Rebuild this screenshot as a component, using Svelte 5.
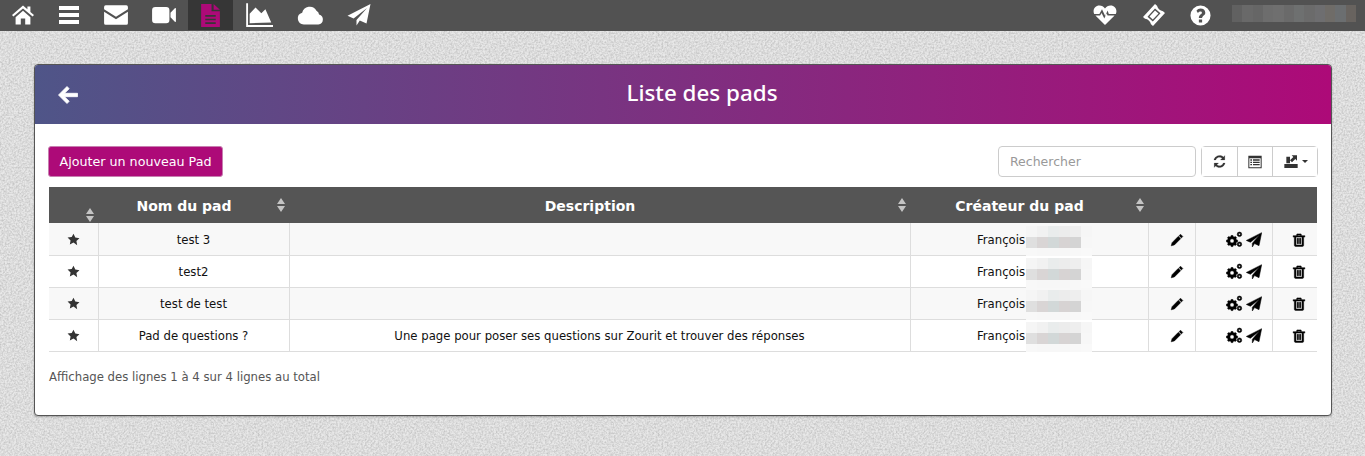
<script>
  const icons = {
    home: 'M12 2.500 1 12l1.400 1.600L12 5.400l9.600 8.200L23 12l-3.600-3.100V3.500h-3v2.800zM4.600 14.200 12 7.800l7.400 6.400V21.500h-5.200v-6H9.800v6H4.600z',
    bars: 'M2 3h20v4H2zM2 10h20v4H2zM2 17h20v4H2z',
    envelope: 'M2.500 3h19A1.500 1.500 0 0 1 23 4.500V6.600L12 13.600 1 6.600V4.500A1.500 1.500 0 0 1 2.500 3zM1 9l11 7 11-7v10.500a1.500 1.500 0 0 1-1.500 1.500h-19A1.500 1.500 0 0 1 1 19.500z',
    video: 'M4 4.500h10a3 3 0 0 1 3 3v9a3 3 0 0 1-3 3H4a3 3 0 0 1-3-3v-9a3 3 0 0 1 3-3zM18 10l4-4.200c.5-.5 1-.2 1 .4v11.600c0 .6-.5.9-1 .4L18 14z',
    file: 'M3 1h10v7h8v15H3zM15 1l6 5.400H15zM7 11.500v1.600h10v-1.600zM7 15v1.600h10V15zM7 18.500v1.600h10v-1.600z',
    chart: 'M1 2h1.600v18.600H24V22.200H1zM4 19V11l5-5.500 5 5 3.500-3.500 5 11.500z',
    cloud: 'M6 20a5.300 5.300 0 0 1-1.400-10.400A6.800 6.800 0 0 1 17.300 7.800 4 4 0 0 1 19.600 11 4.600 4.600 0 0 1 19 20z',
    plane: 'M23.500 1 19.500 20.500 12.800 17.400 9.500 22.500V17L20 5 6.600 15.400 .5 12.700z',
    heart: 'M12 22 2.400 12.600h4.700l1.500-2.700 2.700 5.600 2.300-5 1 2.100h7L12 22zM1.200 11C-.7 6.600 2 2.500 6.400 2.500c2.400 0 4.200 1.300 5.600 3.100 1.400-1.800 3.200-3.100 5.600-3.100 4.400 0 7.100 4.100 5.200 8.500h-7L14.600 7.600l-2.400 5.300L9 6.300 6.400 11z',
    ticket: 'M13 1 15 2.800Q16.500 7.500 21 8.200L23 10 11 23 9 21.200Q7.500 16.500 3 15.800L1 14zM13 5.500 5.500 13.700 10.800 18.500 18.500 10.300zM13 7.500 16.500 10.500 10.800 16.500 7.500 13.500z',
    question: 'M12 1.500a10.500 10.500 0 1 0 0 21 10.500 10.500 0 0 0 0-21zM10.300 16.200h3.400v3h-3.400zM12 4.800c2.900 0 5 1.700 5 4.200 0 2.900-3.300 3-3.300 5.700h-3.400c0-3.800 3.200-3.900 3.200-5.500 0-.8-.7-1.300-1.600-1.300-1 0-1.800.5-2.600 1.400L7.800 7.100C8.900 5.700 10.300 4.800 12 4.800z',
    back: 'M11 3.500 13.200 5.700 8.500 10.300H21.500V13.700H8.500l4.700 4.600L11 20.500 2.500 12z',
    refresh: 'M20.500 2.500v7h-7l2.700-2.700A6.300 6.300 0 0 0 6 9.500H3A9.300 9.300 0 0 1 18.300 4.700zM3.500 21.500v-7h7l-2.700 2.700A6.300 6.300 0 0 0 18 14.500h3A9.300 9.300 0 0 1 5.700 19.300z',
    list: 'M2 2.500h20v19H2zM3.500 6.500v13.500h17V6.500zM5 8h2.500v2H5zM9 8h10v2H9zM5 11.500h2.500v2H5zM9 11.500h10v2H9zM5 15h2.500v2H5zM9 15h10v2H9z',
    exportIcon: 'M5 4h5.500v10H5zM21 2v8l-2.500-2.500-5 5-3-3 5-5L13 2zM2 15h20v6H2z',
    star: 'M12 1.500l3.300 7 7.700 1-5.600 5.300 1.400 7.600L12 17.700 5.200 21.400l1.400-7.600L1 8.500l7.700-1z',
    pencil: 'M18 2l4 4-2.500 2.500-4-4zM14.300 5.700l4 4L7.500 20.500 2 22l1.500-5.500z',
    cogs: 'M8.500 6.500l1.200-.3.500 1.800 1.400.6 1.600-.9 1.700 1.700-.9 1.600.6 1.400 1.800.5v2.400l-1.800.5-.6 1.400.9 1.600-1.700 1.700-1.600-.9-1.400.6-.5 1.800H7.300l-.5-1.800-1.400-.6-1.600.9-1.700-1.700.9-1.600-.6-1.400L.6 15.300v-2.400l1.800-.5.6-1.400-.9-1.600 1.700-1.700 1.600.9 1.400-.6.5-1.800zM8.500 11a3 3 0 1 0 0 6 3 3 0 0 0 0-6zM19 1.500a3.200 3.200 0 1 1 0 6.400 3.200 3.200 0 0 1 0-6.400zM19 3.300a1.400 1.400 0 1 0 0 2.800 1.400 1.400 0 0 0 0-2.800zM19 15.500a3.200 3.200 0 1 1 0 6.400 3.200 3.200 0 0 1 0-6.400zM19 17.300a1.400 1.400 0 1 0 0 2.800 1.400 1.400 0 0 0 0-2.800z',
    trash: 'M8.500 1.500h7l1.200 3H22v2.500h-2V21a2 2 0 0 1-2 2H6a2 2 0 0 1-2-2V7H2V4.500h5.300zM10 3.500l-.5 1h5l-.5-1zM6.800 7V20.500H17.200V7zM8.800 9h1.400v9.500H8.800zM11.300 9h1.400v9.500h-1.400zM13.800 9h1.400v9.500h-1.400z'
  };

  // w is the visual slot in the bar, size the svg box (the paths have a margin inside it)
  const leftNav = [
    { name: 'home', w: 21, size: 24 }, { name: 'bars', w: 20, size: 24 }, { name: 'envelope', w: 24, size: 26 },
    { name: 'video', w: 23, size: 26 }, { name: 'file', w: 20, size: 25, active: true }, { name: 'chart', w: 27, size: 28 },
    { name: 'cloud', w: 25, size: 27 }, { name: 'plane', w: 23, size: 24 }
  ];
  const rightNav = [{ name: 'heart', w: 24, size: 24 }, { name: 'ticket', w: 23, size: 24 }, { name: 'question', w: 20, size: 23 }];

  const pads = [
    { name: 'test 3', description: '' },
    { name: 'test2', description: '' },
    { name: 'test de test', description: '' },
    { name: 'Pad de questions ?', description: 'Une page pour poser ses questions sur Zourit et trouver des réponses' }
  ];

  // pixelated shades standing in for the blurred surname
  const blur = ['#f5f5f5', '#f1f1f1', '#e9ecec', '#ececec', '#eeeeee', '#f6f6f6',
                '#dfdfdf', '#d9d5d5', '#d2d8d8', '#d7d3d3', '#d4d4d4', '#f7f7f7',
                '#f8f8f8', '#f7f7f7', '#f7f7f7', '#f7f7f7', '#f8f8f8', '#f9f9f9'];
  const navBlur = ['#616161', '#696969', '#666', '#6d6d6d', '#6f6f6f', '#6a6a6a', '#6e7070', '#6b6b6b', '#6e6e70', '#6f6c68', '#6b6e70', '#68635f'];
</script>

{#snippet icon(name, size)}
  <svg class="icon" width={size} height={size} viewBox="0 0 24 24" aria-hidden="true">
    <path d={icons[name]} fill="currentColor" fill-rule="evenodd" />
  </svg>
{/snippet}

{#snippet sorter()}
  <svg class="sorter" width="8" height="14" viewBox="0 0 8 14" aria-hidden="true">
    <path d="M4 0 8 6H0zM0 8h8l-4 6z" fill="#c4c4c4" />
  </svg>
{/snippet}

{#snippet navItem(item)}
  <a class="nav-item" class:active={item.active} href="#top">
    <span class="slot" style:width="{item.w}px">{@render icon(item.name, item.size)}</span>
  </a>
{/snippet}

<nav class="topbar">
  {#each leftNav as item}
    {@render navItem(item)}
  {/each}
  <div class="nav-right">
    {#each rightNav as item}
      {@render navItem(item)}
    {/each}
    <div class="nav-user">
      {#each navBlur as shade}<span style:background={shade}></span>{/each}
    </div>
  </div>
</nav>

<main class="page">
  <section class="card">
    <header class="card-head">
      <a class="back" href="#top">{@render icon('back', 24)}</a>
      <h1>Liste des pads</h1>
    </header>

    <div class="card-body">
      <div class="toolbar">
        <button class="add">Ajouter un nouveau Pad</button>
        <div class="tools">
          <input class="search" type="text" placeholder="Rechercher" />
          <div class="btn-group">
            <button class="semi">{@render icon('refresh', 15)}</button>
            <button>{@render icon('list', 16)}</button>
            <button class="export">{@render icon('exportIcon', 16)}<i class="caret"></i></button>
          </div>
        </div>
      </div>

      <table>
        <colgroup>
          <col style="width:49px" /><col style="width:191px" /><col style="width:621px" />
          <col style="width:238px" /><col style="width:47px" /><col style="width:77px" /><col />
        </colgroup>
        <thead>
          <tr>
            <th class="star-head">{@render sorter()}</th>
            <th>Nom du pad{@render sorter()}</th>
            <th>Description{@render sorter()}</th>
            <th>Créateur du pad{@render sorter()}</th>
            <th></th><th></th><th></th>
          </tr>
        </thead>
        <tbody>
          {#each pads as pad}
            <tr>
              <td class="fav">{@render icon('star', 13)}</td>
              <td>{pad.name}</td>
              <td>{pad.description}</td>
              <td>
                <span class="creator">François<span class="blurred">{#each blur as shade}<span style:background={shade}></span>{/each}</span></span>
              </td>
              <td class="act pen bold">{@render icon('pencil', 14)}</td>
              <td class="actions bold">{@render icon('cogs', 17)}{@render icon('plane', 16)}</td>
              <td class="act bold">{@render icon('trash', 14)}</td>
            </tr>
          {/each}
        </tbody>
      </table>

      <p class="summary">Affichage des lignes 1 à 4 sur 4 lignes au total</p>
    </div>
  </section>
</main>

<style>
  :global(body) {
    margin: 0;
    background-color: #e8e8e8;
    background-image: url("data:image/svg+xml,%3Csvg xmlns='http://www.w3.org/2000/svg' width='400' height='400'%3E%3Cfilter id='n'%3E%3CfeTurbulence type='fractalNoise' baseFrequency='0.55' numOctaves='2'/%3E%3CfeColorMatrix values='0 0 0 0 0.4 0 0 0 0 0.4 0 0 0 0 0.4 1.1 0 0 0 -0.35'/%3E%3C/filter%3E%3Crect width='400' height='400' filter='url(%23n)'/%3E%3C/svg%3E");
    font-family: "DejaVu Sans", Verdana, sans-serif;
    font-size: 11.7px;
    color: #111;
  }

  .icon {
    display: block;
  }

  .bold :global(path) {
    stroke: currentColor;
    stroke-width: 0.8;
  }

  .semi :global(path) {
    stroke: currentColor;
    stroke-width: 0.3;
  }

  .topbar {
    display: flex;
    height: 31px;
    background: #525252;
    color: #fff;
  }

  .nav-item {
    display: flex;
    align-items: center;
    height: 30px;
    padding: 0 12.5px;
    color: #fff;
  }

  .nav-item.active {
    background: #363636;
    color: #ad0a78;
  }

  .slot {
    display: flex;
    justify-content: center;
  }

  .slot .icon {
    flex: none;
  }

  .nav-right {
    display: flex;
    margin-left: auto;
    padding-right: 9px;
  }

  .nav-user {
    display: grid;
    grid-template-columns: repeat(12, 1fr);
    width: 124px;
    height: 17px;
    margin: 5px 0 0 9.5px;
  }

  .page {
    padding: 33px 33px 40px 34px;
  }

  .card {
    background: #fff;
    border: 1px solid #555;
    border-radius: 4px;
    box-shadow: 0 1px 2px rgba(0, 0, 0, 0.25);
    overflow: hidden;
  }

  .card-head {
    position: relative;
    height: 59px;
    box-sizing: border-box;
    padding: 0 0 4px 38px;
    display: flex;
    align-items: center;
    justify-content: center;
    background: linear-gradient(90deg, #4f5588, #ad0a78);
    color: #fff;
  }

  .card-head h1 {
    margin: 0;
    font-family: "Noto Sans", sans-serif;
    font-size: 22.4px;
    font-weight: 500;
  }

  .back {
    position: absolute;
    left: 21px;
    top: 18px;
    color: #fff;
  }

  .back :global(path) {
    stroke: currentColor;
    stroke-width: 0.8;
  }

  .card-body {
    padding: 22px 14px 0 14px;
    height: 291px;
    box-sizing: border-box;
  }

  .toolbar {
    display: flex;
    justify-content: space-between;
    height: 31px;
    margin: 0 -1px 10px 0;
  }

  button {
    font: inherit;
  }

  .add {
    width: 175px;
    height: 31px;
    padding: 0;
    margin-left: -1px;
    font-size: 12.7px;
    color: #fff;
    background: #ad0a78;
    border: 1px solid #c77fb0;
    border-radius: 3px;
  }

  .tools {
    display: flex;
    gap: 5px;
  }

  .search {
    width: 198px;
    height: 31px;
    box-sizing: border-box;
    padding: 0 11px;
    font: inherit;
    font-size: 12.5px;
    border: 1px solid #ccc;
    border-radius: 4px;
  }

  .search::placeholder {
    color: #999;
  }

  .btn-group {
    display: flex;
    border: 1px solid #ccc;
    border-radius: 4px;
    box-sizing: border-box;
    height: 31px;
  }

  .btn-group button {
    display: flex;
    align-items: center;
    justify-content: center;
    width: 35px;
    padding: 0;
    color: #333;
    background: #fff;
    border: 0;
    border-left: 1px solid #ccc;
  }

  .btn-group button:first-child {
    border-left: 0;
  }

  .btn-group .export {
    width: 45px;
    gap: 3px;
  }

  .caret {
    border-top: 3px solid #333;
    border-left: 3px solid transparent;
    border-right: 3px solid transparent;
  }

  table {
    width: 1268px;
    table-layout: fixed;
    border-collapse: collapse;
  }

  th {
    position: relative;
    height: 36px;
    padding: 2px 19px 0 0;
    color: #fff;
    background: #555;
    font-size: 14px;
    font-weight: 700;
    vertical-align: middle;
    box-sizing: border-box;
  }

  .sorter {
    position: absolute;
    right: 4px;
    top: 11px;
  }

  .star-head .sorter {
    right: 4px;
    top: 21px;
  }

  td {
    height: 32px;
    padding: 1px 0 0;
    box-sizing: border-box;
    text-align: center;
    border-bottom: 1px solid #ddd;
    border-left: 1px solid #ddd;
    color: #111;
  }

  tbody tr:first-child td {
    padding-top: 2px;
  }

  td:first-child {
    border-left: 0;
  }

  td > .icon {
    margin: 0 auto;
  }

  tbody tr:nth-child(odd) td {
    background: #f8f8f8;
  }

  .fav {
    color: #333;
  }

  .act {
    padding-left: 9px;
    color: #000;
  }

  .act.pen {
    padding-left: 11px;
  }

  .actions {
    padding-left: 21px;
    color: #000;
  }

  .actions > .icon {
    display: inline-block;
    margin: 0 1.5px;
    vertical-align: middle;
  }

  .creator {
    position: relative;
    margin-left: -56px;
  }

  .blurred {
    position: absolute;
    left: 100%;
    top: -7px;
    display: grid;
    grid-template-columns: repeat(6, 11px);
    grid-template-rows: 11px 11px 8px;
    width: 66px;
    margin-left: 1px;
  }

  .summary {
    margin: 18px 0 0;
    color: #555;
  }
</style>
